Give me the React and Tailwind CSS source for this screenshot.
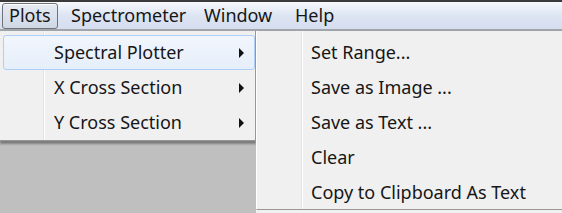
import React from 'react';

const font = { fontFamily: '"Segoe UI", "Noto Sans", "Liberation Sans", sans-serif' };

const Arrow = () => (
  <svg width="6" height="10" viewBox="0 0 6 10" className="shrink-0">
    <path d="M0 0 L5 5 L0 10 Z" fill="#111" />
  </svg>
);

const menuItems = ['Spectral Plotter', 'X Cross Section', 'Y Cross Section'];
const subItems = ['Set Range...', 'Save as Image ...', 'Save as Text ...', 'Clear', 'Copy to Clipboard As Text'];

export default function App() {
  return (
    <div className="w-[562px] h-[213px] overflow-hidden flex flex-col bg-[#bfbfbf] text-[18px] text-[#161616]" style={font}>
      {/* menubar */}
      <div className="h-[2px] bg-[#3a3a3a]" />
      <div className="h-[29px] flex items-center bg-gradient-to-b from-[#f7f9fd] via-[#dde5f3] to-[#d5ddef] border-b-2 border-[#a0a4ab]">
        <div className="ml-[2px] w-[56px] h-[26px] pl-[6px] flex items-center rounded-[3px] border border-[#6f7378] bg-gradient-to-b from-[#e6ebf3] to-[#cfd7e6] shadow-[inset_0_1px_0_#ffffff]">
          Plots
        </div>
        <div className="w-[133px] pl-[13px]">Spectrometer</div>
        <div className="w-[91px] pl-[13px]">Window</div>
        <div className="pl-[13px]">Help</div>
      </div>

      <div className="flex flex-1 min-h-0">
        {/* first dropdown */}
        <div className="w-[256px] flex flex-col">
          <div className="relative h-[110px] bg-[#f0f0f0] border-r border-b border-[#979797] pt-[4px] shadow-[0_3px_2px_rgba(0,0,0,0.35)]">
            <div className="absolute left-[43px] top-0 bottom-0 w-[2px] bg-[linear-gradient(to_right,#e2e3e3_50%,#ffffff_50%)]" />
            {menuItems.map((t, i) => (
              <div
                key={t}
                className={
                  'relative ml-[3px] h-[35px] flex items-center pl-[50px] pr-[9px] rounded-[3px] border ' +
                  (i === 0
                    ? 'border-[#aecff7] bg-gradient-to-b from-[#f2f6fc] to-[#e5eefa]'
                    : 'border-transparent')
                }
              >
                <span className="flex-1">{t}</span>
                <Arrow />
              </div>
            ))}
          </div>
        </div>

        {/* submenu */}
        <div className="flex-1 flex flex-col">
          <div className="relative h-[179px] bg-[#f0f0f0] border-b border-[#979797] border-l border-l-[#ffffff] pt-[4px]">
            <div className="absolute left-[44px] top-0 bottom-0 w-[2px] bg-[linear-gradient(to_right,#e2e3e3_50%,#ffffff_50%)]" />
            {subItems.map((t) => (
              <div key={t} className="relative h-[35px] flex items-center pl-[54px]">
                {t}
              </div>
            ))}
          </div>
          <div className="flex-1 bg-[#f0f0f0]" />
        </div>
      </div>
    </div>
  );
}
